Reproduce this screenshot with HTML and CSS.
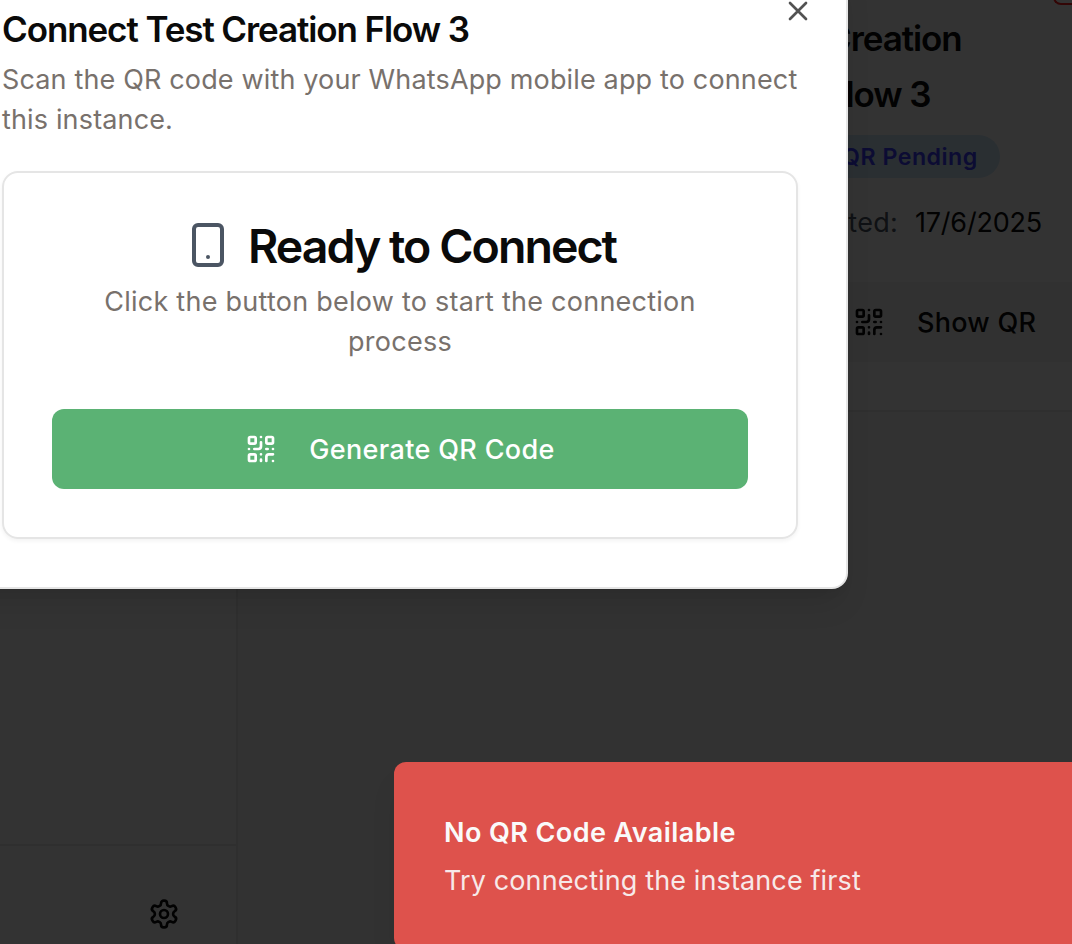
FILE: index.html
```html
<!DOCTYPE html>
<html lang="en">
<head>
<meta charset="utf-8">
<title>Connect instance</title>
<link rel="stylesheet" href="styles.css">
</head>
<body>
<svg class="sprite" aria-hidden="true">
  <symbol id="qr" viewBox="0 0 24 24"><rect width="5" height="5" x="3" y="3" rx="1"/><rect width="5" height="5" x="16" y="3" rx="1"/><rect width="5" height="5" x="3" y="16" rx="1"/><path d="M21 16h-3a2 2 0 0 0-2 2v3M21 21v.01M12 7v3a2 2 0 0 1-2 2H7M3 12h.01M12 3h.01M12 16v.01M16 12h1M21 12v.01M12 21v-1"/></symbol>
</svg>
<div class="app">
  <aside class="sidebar">
    <div class="sidebar-footer">
      <svg class="icon" viewBox="0 0 24 24"><path d="M12.22 2h-.44a2 2 0 0 0-2 2v.18a2 2 0 0 1-1 1.73l-.43.25a2 2 0 0 1-2 0l-.15-.08a2 2 0 0 0-2.73.73l-.22.38a2 2 0 0 0 .73 2.73l.15.1a2 2 0 0 1 1 1.72v.51a2 2 0 0 1-1 1.74l-.15.09a2 2 0 0 0-.73 2.73l.22.38a2 2 0 0 0 2.73.73l.15-.08a2 2 0 0 1 2 0l.43.25a2 2 0 0 1 1 1.73V20a2 2 0 0 0 2 2h.44a2 2 0 0 0 2-2v-.18a2 2 0 0 1 1-1.73l.43-.25a2 2 0 0 1 2 0l.15.08a2 2 0 0 0 2.73-.73l.22-.39a2 2 0 0 0-.73-2.73l-.15-.08a2 2 0 0 1-1-1.74v-.5a2 2 0 0 1 1-1.74l.15-.09a2 2 0 0 0 .73-2.73l-.22-.38a2 2 0 0 0-2.73-.73l-.15.08a2 2 0 0 1-2 0l-.43-.25a2 2 0 0 1-1-1.73V4a2 2 0 0 0-2-2z"/><circle cx="12" cy="12" r="3"/></svg>
    </div>
  </aside>
  <main class="main">
    <article class="instance">
      <header class="instance-head">
        <div>
          <h3 class="instance-title">Creation<br>Flow 3</h3>
          <div class="badge">QR Pending</div>
        </div>
        <span class="status-chip"></span>
      </header>
      <p class="created"><span class="created-label">Created:</span><span class="date">17/6/2025</span></p>
      <button class="show-qr"><svg class="icon"><use href="#qr"/></svg><span class="label">Show QR</span></button>
    </article>
  </main>
</div>
<div class="overlay"></div>
<section class="dialog" role="dialog">
  <svg class="icon close" viewBox="0 0 24 24"><path d="M18 6 6 18M6 6l12 12"/></svg>
  <h2 class="dialog-title">Connect Test Creation Flow 3</h2>
  <p class="text intro">Scan the QR code with your WhatsApp mobile app to connect this instance.</p>
  <div class="card">
    <h3 class="card-title"><svg class="icon phone" viewBox="0 0 24 24"><rect x="5" y="2" width="14" height="20" rx="2"/><path d="M12 18h.01"/></svg>Ready to Connect</h3>
    <p class="text">Click the button below to start the connection process</p>
    <button class="generate"><svg class="icon"><use href="#qr"/></svg><span class="label">Generate QR Code</span></button>
  </div>
</section>
<div class="toast" role="alert">
  <strong class="toast-title">No QR Code Available</strong>
  <span class="toast-text">Try connecting the instance first</span>
</div>
</body>
</html>
```

FILE: styles.css
```css
* { box-sizing: border-box; }
body { margin: 0; height: 944px; overflow: hidden; position: relative; font: 27px/40px Inter, sans-serif; letter-spacing: 0.25px; color: #0a0a0a; background: #fafafa; }
h2, h3, p { margin: 0; }
button { border: 0; font: inherit; letter-spacing: inherit; color: inherit; }
.sprite { position: absolute; width: 0; height: 0; }
.icon { width: 32px; height: 32px; flex: none; fill: none; stroke: currentColor; stroke-width: 2; stroke-linecap: round; stroke-linejoin: round; }
.label { padding-top: 2px; }
.app { display: flex; height: 944px; }
.sidebar { width: 238px; flex: none; display: flex; flex-direction: column; justify-content: flex-end; background: #fff; border-right: 2px solid #ececec; }
.sidebar-footer { height: 100px; padding: 52px 56px 0 0; border-top: 2px solid #ececec; display: flex; justify-content: flex-end; }
.main { flex: 1; min-width: 0; padding-left: 538px; overflow: hidden; }
.instance { height: 412px; padding: 10px 0 48px 50px; background: #fff; border-bottom: 2px solid #ececec; }
.instance-head { display: flex; justify-content: space-between; height: 193px; }
.instance-title { font-size: 35px; line-height: 56px; font-weight: 600; letter-spacing: -1.1px; }
.badge { width: fit-content; height: 43px; line-height: 44px; margin: 13px 0 0 -6px; padding: 0 22px; border-radius: 22px; background: #d0e8fa; color: #3c3cff; font-size: 23.2px; font-weight: 600; letter-spacing: 0.5px; white-space: nowrap; }
.status-chip { width: 19px; height: 56px; margin-top: -61px; flex: none; border: 2px solid #ff2020; border-right: 0; border-radius: 8px 0 0 8px; }
.created { display: flex; justify-content: flex-end; gap: 17px; padding-right: 30px; }
.created-label { color: #4b5563; }
.date { letter-spacing: -0.2px; }
.show-qr { display: flex; align-items: center; gap: 32px; width: 100%; height: 80px; margin-top: 39px; padding: 0 27px; background: #f5f5f5; font-weight: 500; }
.overlay { position: absolute; inset: 0; background: rgba(0, 0, 0, .8); }
.dialog { position: absolute; left: -48px; top: -39px; width: 896px; padding: 48px; background: #fff; border: 2px solid #e5e5e5; border-radius: 16px; box-shadow: 0 20px 30px -6px rgba(0, 0, 0, .1), 0 8px 12px -8px rgba(0, 0, 0, .1); }
.close { position: absolute; right: 32px; top: 32px; opacity: .7; }
.dialog-title { font-size: 35px; line-height: 36px; font-weight: 600; letter-spacing: -1.1px; margin-bottom: 12px; }
.text { padding-top: 1px; margin-bottom: -1px; color: #78716c; }
.intro { margin-right: -10px; letter-spacing: 0.15px; }
.card { margin-top: 33px; padding: 48px; border: 2px solid #e5e5e5; border-radius: 16px; text-align: center; box-shadow: 0 2px 4px rgba(0, 0, 0, .05); }
.intro + .card { margin-top: 32px; }
.card-title { display: flex; justify-content: center; gap: 16px; height: 48px; font-size: 46.5px; line-height: 51px; font-weight: 600; letter-spacing: -1.95px; margin-bottom: 12px; }
.phone { width: 48px; height: 48px; color: #4b5563; }
.card .text { margin-bottom: 0; }
.generate { display: flex; align-items: center; justify-content: center; gap: 32px; width: 100%; height: 80px; margin-top: 47px; border-radius: 12px; background: #5bb274; color: #fff; font-weight: 500; letter-spacing: 0.35px; }
.intro { margin-bottom: 0; padding-top: 0; position: relative; top: 1px; }
.toast { position: absolute; left: 394px; top: 762px; right: 0; height: 188px; padding: 51px 50px 49px; display: flex; flex-direction: column; gap: 8px; border-radius: 12px 0 0 12px; background: #de524c; color: #fafafa; box-shadow: 0 20px 30px -6px rgba(0, 0, 0, .1); }
.toast-title { font-weight: 600; letter-spacing: 0.42px; }
.toast-text { opacity: .9; letter-spacing: 0.12px; }
```
